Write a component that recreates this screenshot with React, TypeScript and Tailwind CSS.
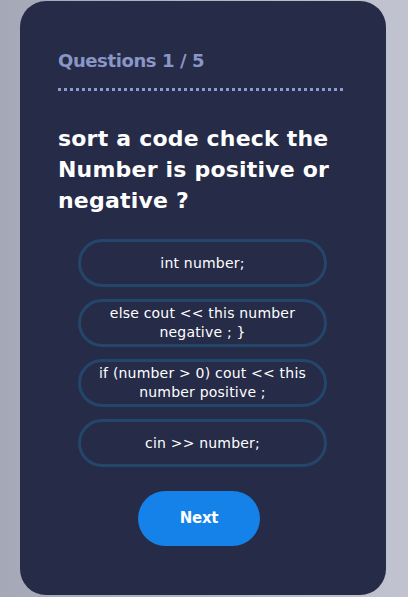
const options = [
  'int number;',
  'else cout << this number negative ; }',
  'if (number > 0) cout << this number positive ;',
  'cin >> number;',
];

export default function App() {
  return (
    <div
      className="w-[408px] h-[597px] overflow-hidden bg-gradient-to-r from-[#a4a8b7] to-[#c1c4d0] pl-[20px] pt-px"
      style={{ fontFamily: '"DejaVu Sans", Inter, sans-serif' }}
    >
      <div className="w-[366px] h-[594px] bg-[#262b48] rounded-[26px] px-[38px] pt-[48px] flex flex-col">
        <h2 className="text-[18px] font-semibold text-[#8a96c6] tracking-[-0.4px] leading-6">Questions 1 / 5</h2>
        <div className="mt-[15px] w-[285px] border-t-[3px] border-dotted border-[#8a9ed6]" />
        <h1 className="mt-[32px] text-[22px] font-bold text-white leading-[31px] tracking-[0.2px]">
          sort a code check the Number is positive or negative ?
        </h1>
        <div className="mt-[23px] ml-[20px] flex flex-col items-start gap-3">
          {options.map((o) => (
            <div
              key={o}
              className="w-[249px] h-[48px] rounded-[24px] border-[3px] border-[#24466a] flex items-center justify-center px-2 text-center text-[14px] leading-[19px] text-white tracking-[0.2px]"
            >
              {o}
            </div>
          ))}
        </div>
        <div className="mt-[24px] ml-[80px]">
          <button className="w-[122px] h-[55px] rounded-full bg-[#1482e8] text-white text-[15px] font-bold tracking-[-0.3px]">Next</button>
        </div>
      </div>
    </div>
  );
}
